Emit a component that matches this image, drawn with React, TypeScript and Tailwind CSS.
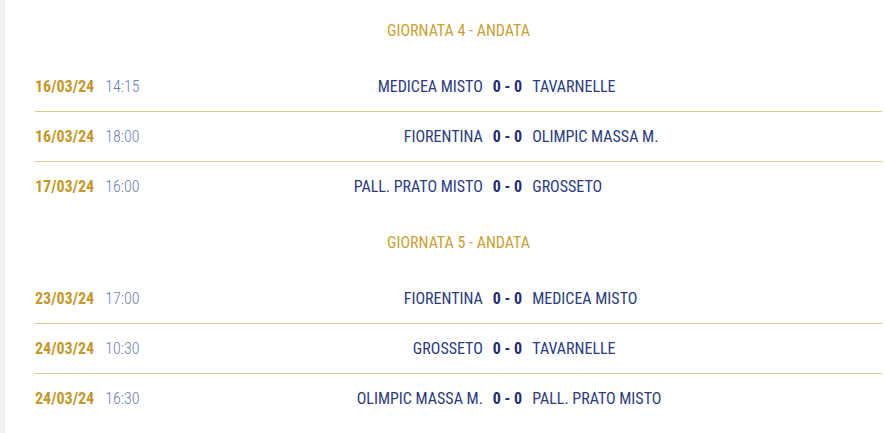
const groups = [
  {
    title: "GIORNATA 4 - ANDATA",
    matches: [
      { date: "16/03/24", time: "14:15", home: "MEDICEA MISTO", away: "TAVARNELLE" },
      { date: "16/03/24", time: "18:00", home: "FIORENTINA", away: "OLIMPIC MASSA M." },
      { date: "17/03/24", time: "16:00", home: "PALL. PRATO MISTO", away: "GROSSETO" },
    ],
  },
  {
    title: "GIORNATA 5 - ANDATA",
    matches: [
      { date: "23/03/24", time: "17:00", home: "FIORENTINA", away: "MEDICEA MISTO" },
      { date: "24/03/24", time: "10:30", home: "GROSSETO", away: "TAVARNELLE" },
      { date: "24/03/24", time: "16:30", home: "OLIMPIC MASSA M.", away: "PALL. PRATO MISTO" },
    ],
  },
];

export default function App() {
  return (
    <div className="flex min-h-[433px] w-[886px] bg-white font-['Roboto_Condensed','Roboto',sans-serif] font-stretch-[87.5%] text-[16px]">
      <div className="w-[5px] shrink-0 bg-[#f2f2f2]" />
      <div className="flex-1 pl-[30px] pr-[4px]">
        {groups.map((g) => (
          <div key={g.title}>
            <div className="flex h-[62px] items-center justify-center text-[#c9a035]">{g.title}</div>
            {g.matches.map((m, i) => (
              <div
                key={m.date + m.time}
                className={`flex h-[50px] items-center whitespace-nowrap ${
                  i < g.matches.length - 1 ? "border-b border-[#e2c98a]" : ""
                }`}
              >
                <div className="flex w-[98px] shrink-0 gap-[11px]">
                  <span className="font-bold text-[#c4982a]">{m.date}</span>
                  <span className="font-light text-[#6f7eb0]">{m.time}</span>
                </div>
                <span className="flex-1 text-right text-[#2c3a7c]">{m.home}</span>
                <span className="px-[10px] font-bold text-[#1f2d6d]">0 - 0</span>
                <span className="flex-1 text-[#2c3a7c]">{m.away}</span>
              </div>
            ))}
          </div>
        ))}
      </div>
    </div>
  );
}
